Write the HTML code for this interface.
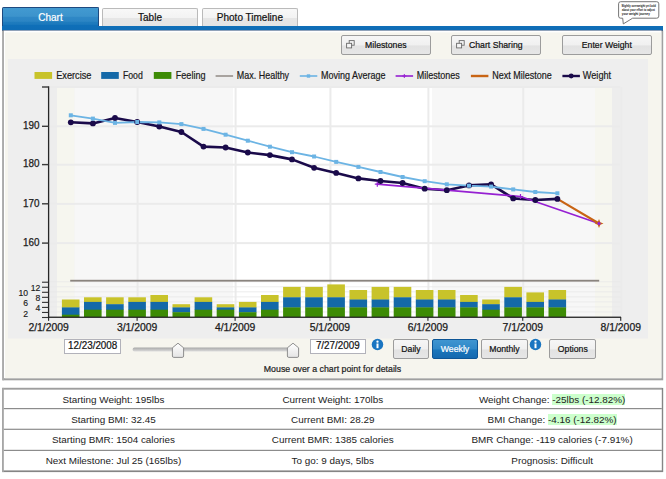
<!DOCTYPE html>
<html><head><meta charset="utf-8"><title>Weight Chart</title>
<style>
html,body{margin:0;padding:0}
body{width:666px;height:479px;position:relative;overflow:hidden;background:#fff;font-family:"Liberation Sans",Arial,sans-serif;color:#222}
.abs{position:absolute;box-sizing:border-box}
.tab{position:absolute;box-sizing:border-box;text-align:center;font-size:10px;}
.tab.on{left:2.4px;top:6.9px;width:96.2px;height:20px;background:linear-gradient(#429ad1 0,#3c93cc 44%,#2f88c6 48%,#2c85c4 70%,#1f7cbe 74%,#1c79bc 86%,#0f6fb8 90%,#0f6fb8 100%);border:1px solid #1d4a80;border-bottom:0;border-radius:1.5px 1.5px 0 0;color:#fff;line-height:19px}
.tab.off{top:8px;width:96px;height:18px;background:linear-gradient(#f8f8f8 0,#f3f3f3 50%,#e6e6e6 55%,#e4e4e4 100%);border:1px solid #bababa;border-bottom:0;border-radius:2px 2px 0 0;color:#111;line-height:17.4px}
.bar{left:2.4px;top:26px;width:660.7px;height:4.7px;background:linear-gradient(#0f6fb8 0,#0f6db6 70%,#0a3f7c 78%,#0a3f7c 100%)}
.panel{left:2.2px;top:30.7px;width:661px;height:349.6px;background:#f6f5ee;border-left:1.7px solid #a4a4a4;border-right:1.7px solid #9c9c9c;border-bottom:1.9px solid #9c9c9c;box-shadow:inset 1.2px 1.8px 0 #fff}
.btn{position:absolute;box-sizing:border-box;border:1px solid #9c9c9c;border-radius:2px;background:linear-gradient(#f6f6f6 0,#f0f0f0 50%,#e2e2e2 55%,#e6e6e6 100%);font-size:8.7px;text-align:center;color:#111}
.btn.top{top:35.3px;height:19.4px;width:89.6px;line-height:18px}
.btn.b{top:338.9px;height:19.7px;line-height:18.3px}
.btn.sel{background:linear-gradient(#3f95d0 0,#2f88c8 50%,#1a76bb 55%,#1469b0 100%);border-color:#0d5596;color:#fff}
.inp{position:absolute;box-sizing:border-box;top:339.4px;height:14.4px;width:56.7px;border:1px solid #b2b2ba;background:#fff;font-size:9.9px;line-height:12.4px;text-align:center;color:#111}
.hint{left:3px;width:659px;top:363.7px;text-align:center;font-size:8.8px;color:#222}
.ax{font-size:10.4px;fill:#1a1a1a;stroke:#1a1a1a;stroke-width:0.25px}
.ax2{font-size:8.6px;fill:#1a1a1a;stroke:#1a1a1a;stroke-width:0.15px}
.lg{font-size:10.1px;fill:#1a1a1a;stroke:#1a1a1a;stroke-width:0.2px}
.tbl{position:absolute;box-sizing:border-box;left:3.8px;top:389.6px;width:658px;height:80.8px;font-size:9.9px;color:#222}
.row{position:absolute;left:0;width:100%;height:20.55px;box-sizing:border-box;display:flex}
.row div{flex:1;text-align:center;line-height:20px}
.t{display:inline-block;-webkit-text-stroke:0.2px currentColor;transform:scaleY(1.09);transform-origin:50% 55%}
.g{background:#ccffcc}
</style></head><body>
<div class="tab on"><span class="t">Chart</span></div>
<div class="tab off" style="left:102px"><span class="t">Table</span></div>
<div class="tab off" style="left:201.9px"><span class="t">Photo Timeline</span></div>
<div class="abs bar"></div>
<svg class="abs" style="left:0;top:28px" width="666" height="451" viewBox="0 28 666 451">
<rect x="2.3" y="30.6" width="660.9" height="349.7" fill="#a0a0a0"/>
<rect x="2.3" y="30.6" width="1.7" height="349.7" fill="#ababab"/>
<rect x="4" y="30.6" width="657.5" height="347.6" fill="#ffffff"/>
<rect x="5.1" y="32.4" width="656.1" height="345.8" fill="#f6f5ee"/>
<rect x="2.2" y="387.9" width="661" height="84.2" fill="#858585"/>
<rect x="2.2" y="387.9" width="659.6" height="1.7" fill="#9e9e9e"/>
<rect x="2.2" y="387.9" width="1.6" height="84.2" fill="#a8a8a8"/>
<rect x="3.8" y="389.6" width="658" height="80.8" fill="#ffffff"/>
<rect x="3.8" y="408" width="658" height="1.2" fill="#8c8c8c"/>
<rect x="3.8" y="428.7" width="658" height="1.2" fill="#8c8c8c"/>
<rect x="3.8" y="449.8" width="658" height="1.2" fill="#8c8c8c"/>
</svg>
<div class="btn top" style="left:341px"><svg style="position:absolute;left:4px;top:4.2px" width="9" height="9" viewBox="0 0 9 9"><rect x="3.2" y="0.6" width="5" height="4.6" fill="#f2f2f2" stroke="#6a6a6a" stroke-width="0.9"/><rect x="0.6" y="3.3" width="5" height="4.6" fill="#f4f4f4" stroke="#6a6a6a" stroke-width="0.9"/></svg><span class="t">Milestones</span></div>
<div class="btn top" style="left:451px"><svg style="position:absolute;left:4px;top:4.2px" width="9" height="9" viewBox="0 0 9 9"><rect x="3.2" y="0.6" width="5" height="4.6" fill="#f2f2f2" stroke="#6a6a6a" stroke-width="0.9"/><rect x="0.6" y="3.3" width="5" height="4.6" fill="#f4f4f4" stroke="#6a6a6a" stroke-width="0.9"/></svg><span class="t">Chart Sharing</span></div>
<div class="btn top" style="left:562px"><span class="t">Enter Weight</span></div>
<svg class="chart" width="640" height="280" viewBox="8 59 640 280" style="position:absolute;left:8px;top:59px">
<rect x="8.1" y="58.9" width="640.1" height="279.7" fill="#eeeeee"/>
<rect x="49" y="87" width="8" height="230" fill="#ededed"/>
<rect x="57" y="87" width="17.5" height="230" fill="#f6f6ef"/>
<rect x="74.5" y="87" width="158.5" height="230" fill="#f7f7f7"/>
<rect x="233" y="87" width="199" height="230" fill="#ffffff"/>
<rect x="432" y="87" width="163" height="230" fill="#f7f7f7"/>
<rect x="595" y="87" width="17" height="230" fill="#f6f6ef"/>
<rect x="612" y="87" width="8.5" height="230" fill="#ededed"/>
<rect x="49" y="86.0" width="571.5" height="2" fill="#ebebeb"/>
<rect x="49" y="125.3" width="571.5" height="2" fill="#ebebeb"/>
<rect x="49" y="163.7" width="571.5" height="2" fill="#ebebeb"/>
<rect x="49" y="202.9" width="571.5" height="2" fill="#ebebeb"/>
<rect x="49" y="242.1" width="571.5" height="2" fill="#ebebeb"/>
<rect x="136.608" y="87" width="2" height="230" fill="#ebebeb"/>
<rect x="234.599" y="87" width="2" height="230" fill="#ebebeb"/>
<rect x="329.42900000000003" y="87" width="2" height="230" fill="#ebebeb"/>
<rect x="427.42" y="87" width="2" height="230" fill="#ebebeb"/>
<rect x="522.25" y="87" width="2" height="230" fill="#ebebeb"/>
<rect x="620.241" y="87" width="2" height="230" fill="#ebebeb"/>
<rect x="49" y="311.46" width="571.5" height="1" fill="#e9e9e9" opacity="0.8"/>
<rect x="49" y="306.42" width="571.5" height="1" fill="#e9e9e9" opacity="0.8"/>
<rect x="49" y="301.38" width="571.5" height="1" fill="#e9e9e9" opacity="0.8"/>
<rect x="49" y="296.34" width="571.5" height="1" fill="#e9e9e9" opacity="0.8"/>
<rect x="49" y="291.3" width="571.5" height="1" fill="#e9e9e9" opacity="0.8"/>
<rect x="49" y="286.26" width="571.5" height="1" fill="#e9e9e9" opacity="0.8"/>
<rect x="49" y="281.22" width="571.5" height="1" fill="#e9e9e9" opacity="0.8"/>
<rect x="61.9" y="299.50" width="17.6" height="8.20" fill="#c8c32a"/>
<rect x="61.9" y="307.40" width="17.6" height="7.60" fill="#1469a8"/>
<rect x="61.9" y="314.70" width="17.6" height="2.30" fill="#3d8b05"/>
<rect x="84.0" y="297.30" width="17.6" height="4.90" fill="#c8c32a"/>
<rect x="84.0" y="301.90" width="17.6" height="8.10" fill="#1469a8"/>
<rect x="84.0" y="309.70" width="17.6" height="7.30" fill="#3d8b05"/>
<rect x="106.1" y="297.30" width="17.6" height="7.20" fill="#c8c32a"/>
<rect x="106.1" y="304.20" width="17.6" height="5.80" fill="#1469a8"/>
<rect x="106.1" y="309.70" width="17.6" height="7.30" fill="#3d8b05"/>
<rect x="128.3" y="297.30" width="17.6" height="4.90" fill="#c8c32a"/>
<rect x="128.3" y="301.90" width="17.6" height="8.10" fill="#1469a8"/>
<rect x="128.3" y="309.70" width="17.6" height="7.30" fill="#3d8b05"/>
<rect x="150.4" y="295.00" width="17.6" height="7.20" fill="#c8c32a"/>
<rect x="150.4" y="301.90" width="17.6" height="8.10" fill="#1469a8"/>
<rect x="150.4" y="309.70" width="17.6" height="7.30" fill="#3d8b05"/>
<rect x="172.5" y="304.20" width="17.6" height="3.50" fill="#c8c32a"/>
<rect x="172.5" y="307.40" width="17.6" height="5.10" fill="#1469a8"/>
<rect x="172.5" y="312.20" width="17.6" height="4.80" fill="#3d8b05"/>
<rect x="194.6" y="297.30" width="17.6" height="4.90" fill="#c8c32a"/>
<rect x="194.6" y="301.90" width="17.6" height="8.10" fill="#1469a8"/>
<rect x="194.6" y="309.70" width="17.6" height="7.30" fill="#3d8b05"/>
<rect x="216.7" y="304.20" width="17.6" height="3.50" fill="#c8c32a"/>
<rect x="216.7" y="307.40" width="17.6" height="2.60" fill="#1469a8"/>
<rect x="216.7" y="309.70" width="17.6" height="7.30" fill="#3d8b05"/>
<rect x="238.9" y="301.90" width="17.6" height="5.80" fill="#c8c32a"/>
<rect x="238.9" y="307.40" width="17.6" height="5.10" fill="#1469a8"/>
<rect x="238.9" y="312.20" width="17.6" height="4.80" fill="#3d8b05"/>
<rect x="261.0" y="295.00" width="17.6" height="7.20" fill="#c8c32a"/>
<rect x="261.0" y="301.90" width="17.6" height="8.10" fill="#1469a8"/>
<rect x="261.0" y="309.70" width="17.6" height="7.30" fill="#3d8b05"/>
<rect x="283.1" y="286.90" width="17.6" height="10.70" fill="#c8c32a"/>
<rect x="283.1" y="297.30" width="17.6" height="10.40" fill="#1469a8"/>
<rect x="283.1" y="307.40" width="17.6" height="9.60" fill="#3d8b05"/>
<rect x="305.2" y="286.90" width="17.6" height="10.70" fill="#c8c32a"/>
<rect x="305.2" y="297.30" width="17.6" height="10.40" fill="#1469a8"/>
<rect x="305.2" y="307.40" width="17.6" height="9.60" fill="#3d8b05"/>
<rect x="327.3" y="284.40" width="17.6" height="13.20" fill="#c8c32a"/>
<rect x="327.3" y="297.30" width="17.6" height="10.40" fill="#1469a8"/>
<rect x="327.3" y="307.40" width="17.6" height="9.60" fill="#3d8b05"/>
<rect x="349.5" y="290.00" width="17.6" height="9.80" fill="#c8c32a"/>
<rect x="349.5" y="299.50" width="17.6" height="8.20" fill="#1469a8"/>
<rect x="349.5" y="307.40" width="17.6" height="9.60" fill="#3d8b05"/>
<rect x="371.6" y="286.90" width="17.6" height="12.90" fill="#c8c32a"/>
<rect x="371.6" y="299.50" width="17.6" height="8.20" fill="#1469a8"/>
<rect x="371.6" y="307.40" width="17.6" height="9.60" fill="#3d8b05"/>
<rect x="393.7" y="286.90" width="17.6" height="10.70" fill="#c8c32a"/>
<rect x="393.7" y="297.30" width="17.6" height="10.40" fill="#1469a8"/>
<rect x="393.7" y="307.40" width="17.6" height="9.60" fill="#3d8b05"/>
<rect x="415.8" y="290.00" width="17.6" height="9.80" fill="#c8c32a"/>
<rect x="415.8" y="299.50" width="17.6" height="8.20" fill="#1469a8"/>
<rect x="415.8" y="307.40" width="17.6" height="9.60" fill="#3d8b05"/>
<rect x="437.9" y="290.00" width="17.6" height="9.80" fill="#c8c32a"/>
<rect x="437.9" y="299.50" width="17.6" height="8.20" fill="#1469a8"/>
<rect x="437.9" y="307.40" width="17.6" height="9.60" fill="#3d8b05"/>
<rect x="460.1" y="295.00" width="17.6" height="7.20" fill="#c8c32a"/>
<rect x="460.1" y="301.90" width="17.6" height="5.80" fill="#1469a8"/>
<rect x="460.1" y="307.40" width="17.6" height="9.60" fill="#3d8b05"/>
<rect x="482.2" y="299.50" width="17.6" height="5.00" fill="#c8c32a"/>
<rect x="482.2" y="304.20" width="17.6" height="5.80" fill="#1469a8"/>
<rect x="482.2" y="309.70" width="17.6" height="7.30" fill="#3d8b05"/>
<rect x="504.3" y="286.90" width="17.6" height="10.70" fill="#c8c32a"/>
<rect x="504.3" y="297.30" width="17.6" height="10.40" fill="#1469a8"/>
<rect x="504.3" y="307.40" width="17.6" height="9.60" fill="#3d8b05"/>
<rect x="526.4" y="292.40" width="17.6" height="9.80" fill="#c8c32a"/>
<rect x="526.4" y="301.90" width="17.6" height="5.80" fill="#1469a8"/>
<rect x="526.4" y="307.40" width="17.6" height="9.60" fill="#3d8b05"/>
<rect x="548.5" y="290.00" width="17.6" height="9.80" fill="#c8c32a"/>
<rect x="548.5" y="299.50" width="17.6" height="8.20" fill="#1469a8"/>
<rect x="548.5" y="307.40" width="17.6" height="9.60" fill="#3d8b05"/>
<rect x="70.2" y="279.8" width="529" height="1.8" fill="#8a847e"/>
<rect x="47.95" y="86.3" width="1.3" height="231.5" fill="#262626"/>
<rect x="48" y="316.6" width="573" height="1.3" fill="#222"/>
<rect x="42" y="86.3" width="6.5" height="1.4" fill="#3a3a3a"/>
<rect x="42" y="125.6" width="6.5" height="1.4" fill="#3a3a3a"/>
<rect x="42" y="163.9" width="6.5" height="1.4" fill="#3a3a3a"/>
<rect x="42" y="203.10000000000002" width="6.5" height="1.4" fill="#3a3a3a"/>
<rect x="42" y="242.4" width="6.5" height="1.4" fill="#3a3a3a"/>
<rect x="42" y="316.95" width="6.5" height="1.1" fill="#333"/>
<rect x="42" y="311.90999999999997" width="6.5" height="1.1" fill="#333"/>
<rect x="42" y="306.87" width="6.5" height="1.1" fill="#333"/>
<rect x="42" y="301.83" width="6.5" height="1.1" fill="#333"/>
<rect x="42" y="296.78999999999996" width="6.5" height="1.1" fill="#333"/>
<rect x="42" y="291.75" width="6.5" height="1.1" fill="#333"/>
<rect x="42" y="286.71" width="6.5" height="1.1" fill="#333"/>
<rect x="42" y="281.67" width="6.5" height="1.1" fill="#333"/>
<rect x="48.050000000000004" y="317" width="1.1" height="3.8" fill="#262626"/>
<rect x="136.558" y="317" width="1.1" height="3.8" fill="#262626"/>
<rect x="234.54899999999998" y="317" width="1.1" height="3.8" fill="#262626"/>
<rect x="329.379" y="317" width="1.1" height="3.8" fill="#262626"/>
<rect x="427.37" y="317" width="1.1" height="3.8" fill="#262626"/>
<rect x="522.2" y="317" width="1.1" height="3.8" fill="#262626"/>
<rect x="620.191" y="317" width="1.1" height="3.8" fill="#262626"/>
<text x="22.9" y="129.0" class="ax" textLength="16.5" lengthAdjust="spacingAndGlyphs">190</text>
<text x="22.9" y="167.29999999999998" class="ax" textLength="16.5" lengthAdjust="spacingAndGlyphs">180</text>
<text x="22.9" y="206.5" class="ax" textLength="16.5" lengthAdjust="spacingAndGlyphs">170</text>
<text x="22.9" y="245.79999999999998" class="ax" textLength="16.5" lengthAdjust="spacingAndGlyphs">160</text>
<text x="40.2" y="290.90000000000003" text-anchor="end" class="ax2">12</text>
<text x="40.2" y="300.5" text-anchor="end" class="ax2">8</text>
<text x="40.2" y="310.6" text-anchor="end" class="ax2">4</text>
<text x="28" y="296.40000000000003" text-anchor="end" class="ax2">10</text>
<text x="28" y="306.1" text-anchor="end" class="ax2">6</text>
<text x="28" y="316.5" text-anchor="end" class="ax2">2</text>
<text x="28.400000000000002" y="330.7" class="ax" textLength="40.4" lengthAdjust="spacingAndGlyphs">2/1/2009</text>
<text x="116.908" y="330.7" class="ax" textLength="40.4" lengthAdjust="spacingAndGlyphs">3/1/2009</text>
<text x="214.899" y="330.7" class="ax" textLength="40.4" lengthAdjust="spacingAndGlyphs">4/1/2009</text>
<text x="309.72900000000004" y="330.7" class="ax" textLength="40.4" lengthAdjust="spacingAndGlyphs">5/1/2009</text>
<text x="407.72" y="330.7" class="ax" textLength="40.4" lengthAdjust="spacingAndGlyphs">6/1/2009</text>
<text x="502.55" y="330.7" class="ax" textLength="40.4" lengthAdjust="spacingAndGlyphs">7/1/2009</text>
<text x="600.5409999999999" y="330.7" class="ax" textLength="40.4" lengthAdjust="spacingAndGlyphs">8/1/2009</text>
<polyline points="70.8,122.3 92.9,123.4 115.0,118.0 137.2,122.0 159.3,126.5 181.4,132.0 203.5,146.6 225.6,147.5 247.8,152.5 269.9,155.1 292.0,159.4 314.1,167.8 336.2,172.9 358.4,178.4 380.5,181.0 402.6,183.0 424.7,188.7 446.8,190.2 469.0,185.4 491.1,184.3 513.2,198.4 535.3,200.0 557.4,198.9" fill="none" stroke="#1a0a4a" stroke-width="2.6" stroke-linejoin="round" stroke-linecap="round"/>
<polyline points="377.3,184.2 520.5,196.5 599.0,223.5" fill="none" stroke="#9620d2" stroke-width="1.7" stroke-linejoin="round" stroke-linecap="round"/>
<polyline points="557.4,198.9 599.0,223.5" fill="none" stroke="#c86414" stroke-width="2.2" stroke-linejoin="round" stroke-linecap="round"/>
<polyline points="70.8,115.3 92.9,118.6 115.0,122.9 137.2,122.0 159.3,122.4 181.4,124.1 203.5,128.9 225.6,134.7 247.8,140.7 269.9,146.7 292.0,152.2 314.1,156.5 336.2,161.9 358.4,166.9 380.5,172.0 402.6,177.0 424.7,181.2 446.8,184.3 469.0,185.7 491.1,186.6 513.2,189.4 535.3,192.0 557.4,193.3" fill="none" stroke="#6cb4e4" stroke-width="1.8" stroke-linejoin="round" stroke-linecap="round"/>
<circle cx="70.8" cy="122.3" r="2.9" fill="#1a0a4a"/>
<circle cx="92.9" cy="123.4" r="2.9" fill="#1a0a4a"/>
<circle cx="115.0" cy="118.0" r="2.9" fill="#1a0a4a"/>
<circle cx="137.2" cy="122.0" r="2.9" fill="#1a0a4a"/>
<circle cx="159.3" cy="126.5" r="2.9" fill="#1a0a4a"/>
<circle cx="181.4" cy="132.0" r="2.9" fill="#1a0a4a"/>
<circle cx="203.5" cy="146.6" r="2.9" fill="#1a0a4a"/>
<circle cx="225.6" cy="147.5" r="2.9" fill="#1a0a4a"/>
<circle cx="247.8" cy="152.5" r="2.9" fill="#1a0a4a"/>
<circle cx="269.9" cy="155.1" r="2.9" fill="#1a0a4a"/>
<circle cx="292.0" cy="159.4" r="2.9" fill="#1a0a4a"/>
<circle cx="314.1" cy="167.8" r="2.9" fill="#1a0a4a"/>
<circle cx="336.2" cy="172.9" r="2.9" fill="#1a0a4a"/>
<circle cx="358.4" cy="178.4" r="2.9" fill="#1a0a4a"/>
<circle cx="380.5" cy="181.0" r="2.9" fill="#1a0a4a"/>
<circle cx="402.6" cy="183.0" r="2.9" fill="#1a0a4a"/>
<circle cx="424.7" cy="188.7" r="2.9" fill="#1a0a4a"/>
<circle cx="446.8" cy="190.2" r="2.9" fill="#1a0a4a"/>
<circle cx="469.0" cy="185.4" r="2.9" fill="#1a0a4a"/>
<circle cx="491.1" cy="184.3" r="2.9" fill="#1a0a4a"/>
<circle cx="513.2" cy="198.4" r="2.9" fill="#1a0a4a"/>
<circle cx="535.3" cy="200.0" r="2.9" fill="#1a0a4a"/>
<circle cx="557.4" cy="198.9" r="2.9" fill="#1a0a4a"/>
<rect x="68.8" y="113.3" width="4" height="4" fill="#6cb4e4"/>
<rect x="90.9" y="116.6" width="4" height="4" fill="#6cb4e4"/>
<rect x="113.0" y="120.9" width="4" height="4" fill="#6cb4e4"/>
<rect x="135.2" y="120.0" width="4" height="4" fill="#6cb4e4"/>
<rect x="157.3" y="120.4" width="4" height="4" fill="#6cb4e4"/>
<rect x="179.4" y="122.1" width="4" height="4" fill="#6cb4e4"/>
<rect x="201.5" y="126.9" width="4" height="4" fill="#6cb4e4"/>
<rect x="223.6" y="132.7" width="4" height="4" fill="#6cb4e4"/>
<rect x="245.8" y="138.7" width="4" height="4" fill="#6cb4e4"/>
<rect x="267.9" y="144.7" width="4" height="4" fill="#6cb4e4"/>
<rect x="290.0" y="150.2" width="4" height="4" fill="#6cb4e4"/>
<rect x="312.1" y="154.5" width="4" height="4" fill="#6cb4e4"/>
<rect x="334.2" y="159.9" width="4" height="4" fill="#6cb4e4"/>
<rect x="356.4" y="164.9" width="4" height="4" fill="#6cb4e4"/>
<rect x="378.5" y="170.0" width="4" height="4" fill="#6cb4e4"/>
<rect x="400.6" y="175.0" width="4" height="4" fill="#6cb4e4"/>
<rect x="422.7" y="179.2" width="4" height="4" fill="#6cb4e4"/>
<rect x="444.8" y="182.3" width="4" height="4" fill="#6cb4e4"/>
<rect x="467.0" y="183.7" width="4" height="4" fill="#6cb4e4"/>
<rect x="489.1" y="184.6" width="4" height="4" fill="#6cb4e4"/>
<rect x="511.2" y="187.4" width="4" height="4" fill="#6cb4e4"/>
<rect x="533.3" y="190.0" width="4" height="4" fill="#6cb4e4"/>
<rect x="555.4" y="191.3" width="4" height="4" fill="#6cb4e4"/>
<path d="M374.8,184.2H379.8M377.3,181.7V186.7" stroke="#9620d2" stroke-width="1.2"/>
<path d="M518.0,196.5H523.0M520.5,194.0V199.0" stroke="#9620d2" stroke-width="1.2"/>
<path d="M599,219.0L600.3,222.2L603.5,223.5L600.3,224.8L599,228.0L597.7,224.8L594.5,223.5L597.7,222.2Z" fill="#c86414"/>
<path d="M599,221.5L601,223.5L599,225.5L597,223.5Z" fill="#9620d2"/>
<rect x="34.5" y="72" width="17.6" height="6.9" fill="#c8c32a"/>
<rect x="101.2" y="72" width="17.6" height="6.9" fill="#1469a8"/>
<rect x="153.8" y="72" width="17.6" height="6.9" fill="#3d8b05"/>
<rect x="215.6" y="75.3" width="17.5" height="1.4" fill="#8a847e"/>
<rect x="299.8" y="75.2" width="17.5" height="1.6" fill="#6cb4e4"/>
<rect x="395.6" y="75.2" width="17.5" height="1.6" fill="#9620d2"/>
<rect x="470.9" y="74.8" width="17.5" height="2.4" fill="#c86414"/>
<rect x="562.4" y="74.8" width="17.5" height="2.4" fill="#1a0a4a"/>
<rect x="306.8" y="74.3" width="3.4" height="3.4" fill="#6cb4e4"/>
<path d="M402.3,76H406.3M404.3,74V78" stroke="#9620d2" stroke-width="1"/>
<circle cx="571.2" cy="76" r="2.4" fill="#1a0a4a"/>
<text x="56.2" y="79.4" class="lg" textLength="35.3" lengthAdjust="spacingAndGlyphs">Exercise</text>
<text x="122.9" y="79.4" class="lg" textLength="19.9" lengthAdjust="spacingAndGlyphs">Food</text>
<text x="175.8" y="79.4" class="lg" textLength="29.7" lengthAdjust="spacingAndGlyphs">Feeling</text>
<text x="236.8" y="79.4" class="lg" textLength="52.3" lengthAdjust="spacingAndGlyphs">Max. Healthy</text>
<text x="321.1" y="79.4" class="lg" textLength="64.4" lengthAdjust="spacingAndGlyphs">Moving Average</text>
<text x="416.8" y="79.4" class="lg" textLength="43" lengthAdjust="spacingAndGlyphs">Milestones</text>
<text x="492.2" y="79.4" class="lg" textLength="59.5" lengthAdjust="spacingAndGlyphs">Next Milestone</text>
<text x="582.8" y="79.4" class="lg" textLength="28.3" lengthAdjust="spacingAndGlyphs">Weight</text>
</svg>
<div class="inp" style="left:64.3px"><span class="t">12/23/2008</span></div>
<div class="inp" style="left:309.5px"><span class="t">7/27/2009</span></div>
<svg class="abs" style="left:130px;top:340px" width="175" height="20" viewBox="130 340 175 20">
<defs><linearGradient id="tg" x1="0" y1="0" x2="0" y2="1"><stop offset="0" stop-color="#a9a9a9"/><stop offset="1" stop-color="#dcdcdc"/></linearGradient>
<linearGradient id="th" x1="0" y1="0" x2="0" y2="1"><stop offset="0" stop-color="#ffffff"/><stop offset="1" stop-color="#e4e4e4"/></linearGradient></defs>
<rect x="132.6" y="347.6" width="166.5" height="3.9" rx="1.8" fill="url(#tg)"/>
<path d="M178,343.2L183.6,347.8V356Q183.6,357.4 182.2,357.4H173.8Q172.4,357.4 172.4,356V347.8Z" fill="url(#th)" stroke="#8e8e8e" stroke-width="1"/>
<path d="M293,343.2L298.6,347.8V356Q298.6,357.4 297.2,357.4H288.8Q287.4,357.4 287.4,356V347.8Z" fill="url(#th)" stroke="#8e8e8e" stroke-width="1"/>
</svg>
<div class="btn b" style="left:393.3px;width:35.4px"><span class="t">Daily</span></div>
<div class="btn b sel" style="left:432px;width:46px"><span class="t">Weekly</span></div>
<div class="btn b" style="left:481.2px;width:46.5px"><span class="t">Monthly</span></div>
<div class="btn b" style="left:549.2px;width:47.2px"><span class="t">Options</span></div>
<svg class="abs" style="left:371.1px;top:338.3px" width="13" height="13" viewBox="0 0 13 13"><circle cx="6.5" cy="6.5" r="5.75" fill="#1a75c1"/><circle cx="6.5" cy="3.7" r="1.15" fill="#fff"/><rect x="5.5" y="5.5" width="2" height="4.7" fill="#fff"/></svg>
<svg class="abs" style="left:529.4px;top:338.1px" width="13" height="13" viewBox="0 0 13 13"><circle cx="6.5" cy="6.5" r="5.75" fill="#1a75c1"/><circle cx="6.5" cy="3.7" r="1.15" fill="#fff"/><rect x="5.5" y="5.5" width="2" height="4.7" fill="#fff"/></svg>
<div class="abs hint"><span class="t">Mouse over a chart point for details</span></div>
<div class="tbl">
<div class="row f" style="top:0.00px"><div>Starting Weight: 195lbs</div><div>Current Weight: 170lbs</div><div>Weight Change: <span class="g">-25lbs (-12.82%)</span></div></div>
<div class="row" style="top:19.95px"><div>Starting BMI: 32.45</div><div>Current BMI: 28.29</div><div>BMI Change: <span class="g">-4.16 (-12.82%)</span></div></div>
<div class="row" style="top:40.50px"><div>Starting BMR: 1504 calories</div><div>Current BMR: 1385 calories</div><div>BMR Change: -119 calories (-7.91%)</div></div>
<div class="row" style="top:61.05px"><div>Next Milestone: Jul 25 (165lbs)</div><div>To go: 9 days, 5lbs</div><div>Prognosis: Difficult</div></div>
</div>
<svg class="abs" style="left:616px;top:0" width="44" height="26" viewBox="616 0 44 26">
<path d="M620.7,1.7H656.7Q658.8,1.7 658.8,3.8V16.1Q658.8,18.2 656.7,18.2H632.6L623.3,23.9L622.7,18.2H620.7Q618.6,18.2 618.6,16.1V3.8Q618.6,1.7 620.7,1.7Z" fill="#fff" stroke="#6e6e6e" stroke-width="0.95"/>
<text x="621.4" y="7.3" font-size="2.75" font-weight="bold" fill="#111" textLength="34.4" lengthAdjust="spacingAndGlyphs">Slightly overweight yet bold</text>
<text x="622" y="11.1" font-size="2.75" font-weight="bold" fill="#111" textLength="33" lengthAdjust="spacingAndGlyphs">about your effort to adjust</text>
<text x="621.8" y="14.9" font-size="2.75" font-weight="bold" fill="#111" textLength="28" lengthAdjust="spacingAndGlyphs">your weight journey</text>
</svg>
</body></html>
